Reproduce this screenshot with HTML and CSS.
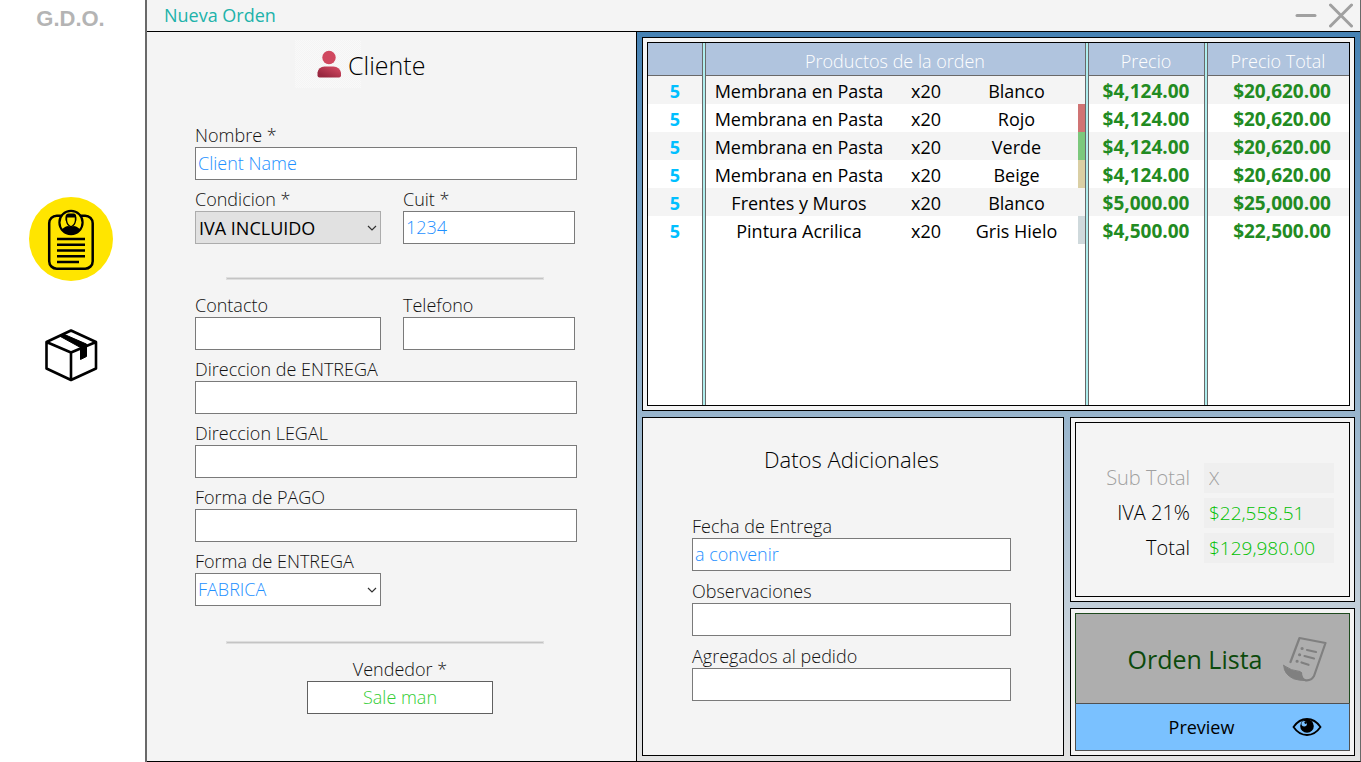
FILE: index.html
```html
<!DOCTYPE html>
<html lang="es">
<head>
<meta charset="utf-8">
<meta name="viewport" content="width=device-width, initial-scale=1">
<title>Nueva Orden</title>
<link rel="stylesheet" href="styles.css">
</head>
<body>
<div class="app">
  <aside class="sidebar">
    <div class="brand">G.D.O.</div>
    <nav class="nav">
      <button class="nav-item nav-item-active" type="button" aria-label="Ordenes">
        <svg width="84" height="84" viewBox="0 0 84 84" fill="none" stroke="#000">
          <rect x="20.200" y="18.700" width="43.500" height="53" rx="7.500" stroke-width="2.500"/>
          <circle cx="42" cy="25.500" r="11.600" fill="#ffe500" stroke-width="2.200"/>
          <path d="M33 33q1.500-3.200 6-4q3 1.600 6 0q4.500.8 6 4q-3.500 4.500-9 4.500t-9-4.500z" fill="#000" stroke="none"/>
          <path d="M37.500 20v3.500q.5 4.500 4.500 6.300q4-1.800 4.500-6.300v-3.500" stroke-width="1.400"/>
          <path d="M36.500 23.500v-4q.4-2.900 3.200-2.900h5.600q2.200.7 2 3.400v3.500h-1.200v-3h-8.400v3z" fill="#000" stroke="none"/>
          <path d="M28 41.900h28M28 47.700h28M28 53.500h28M28 59.300h28M28 65h22" stroke-width="2.500"/>
        </svg>
      </button>
      <button class="nav-item" type="button" aria-label="Productos">
        <svg width="84" height="84" viewBox="0 0 84 84" fill="none" stroke="#000" stroke-width="2.600" stroke-linejoin="round">
          <path d="M42 17.500L67 29v26.500L42 67 17.500 55.500V29zM17.500 29L42 39.500 67 29M42 39.500V67"/>
          <path d="M30.500 23l4-1.900 23 10v12.400l-6 3v-12z" fill="#000" stroke-width="1"/>
        </svg>
      </button>
    </nav>
  </aside>

  <main class="window">
    <header class="titlebar">
      <h1 class="title">Nueva Orden</h1>
      <div class="window-buttons">
        <button class="window-button" type="button" aria-label="Minimizar">
          <svg width="24" height="26" viewBox="0 0 24 26" stroke="#a0a0a0" stroke-width="3" stroke-linecap="round"><path d="M3 13.500h18"/></svg>
        </button>
        <button class="window-button" type="button" aria-label="Cerrar">
          <svg width="24" height="26" viewBox="0 0 24 26" stroke="#a0a0a0" stroke-width="3" stroke-linecap="round"><path d="M1.500 3l21 21M22.500 3l-21 21"/></svg>
        </button>
      </div>
    </header>

    <div class="content">
      <form class="client">
        <h2 class="client-title">
          <svg class="client-icon" width="70" height="50" viewBox="0 0 70 50" aria-hidden="true">
            <defs>
              <pattern id="check" width="2" height="2" patternUnits="userSpaceOnUse"><path d="M0 0h1v1H0zM1 1h1v1H1z" fill="#f9f9f9"/></pattern>
              <linearGradient id="red" x1="0" y1="1" x2="1" y2="0"><stop offset="0.200" stop-color="#98273f"/><stop offset="1" stop-color="#d94d66"/></linearGradient>
            </defs>
            <rect width="66" height="48" fill="url(#check)"/>
            <circle cx="34" cy="17.500" r="6.700" fill="#d0485f"/>
            <path d="M22.500 35.500v-3q1-5.500 7-6h9q6 .5 7.500 6v3q0 2-2 2h-19.500q-2 0-2-2z" fill="url(#red)"/>
          </svg>
          <span>Cliente</span>
        </h2>

        <div class="fields">
          <div class="field">
            <label for="nombre">Nombre *</label>
            <input id="nombre" type="text" value="Client Name">
          </div>
          <div class="pair">
            <div class="field">
              <label for="condicion">Condicion *</label>
              <select id="condicion" class="select-gray"><option>IVA INCLUIDO</option></select>
            </div>
            <div class="field">
              <label for="cuit">Cuit *</label>
              <input id="cuit" type="text" value="1234">
            </div>
          </div>
        </div>

        <hr class="rule">

        <div class="fields">
          <div class="pair">
            <div class="field">
              <label for="contacto">Contacto</label>
              <input id="contacto" type="text">
            </div>
            <div class="field">
              <label for="telefono">Telefono</label>
              <input id="telefono" type="text">
            </div>
          </div>
          <div class="field">
            <label for="dir-entrega">Direccion de ENTREGA</label>
            <input id="dir-entrega" type="text">
          </div>
          <div class="field">
            <label for="dir-legal">Direccion LEGAL</label>
            <input id="dir-legal" type="text">
          </div>
          <div class="field">
            <label for="pago">Forma de PAGO</label>
            <input id="pago" type="text">
          </div>
          <div class="pair">
            <div class="field">
              <label for="entrega">Forma de ENTREGA</label>
              <select id="entrega"><option>FABRICA</option></select>
            </div>
          </div>
        </div>

        <hr class="rule rule-seller">

        <div class="field seller">
          <label for="vendedor">Vendedor *</label>
          <input id="vendedor" type="text" value="Sale man">
        </div>
      </form>

      <div class="order">
        <section class="card products">
          <table class="table">
            <colgroup>
              <col class="col-qty"><col class="col-name"><col class="col-size"><col class="col-color"><col class="col-price"><col class="col-total">
            </colgroup>
            <thead>
              <tr>
                <th aria-label="Cantidad"></th>
                <th class="sep" colspan="3">Productos de la orden</th>
                <th class="sep">Precio</th>
                <th class="sep">Precio Total</th>
              </tr>
            </thead>
            <tbody>
              <tr><td class="qty">5</td><td class="sep name">Membrana en Pasta</td><td>x20</td><td class="color">Blanco</td><td class="sep money">$4,124.00</td><td class="sep money amount">$20,620.00</td></tr>
              <tr><td class="qty">5</td><td class="sep name">Membrana en Pasta</td><td>x20</td><td class="color color-rojo">Rojo</td><td class="sep money">$4,124.00</td><td class="sep money amount">$20,620.00</td></tr>
              <tr><td class="qty">5</td><td class="sep name">Membrana en Pasta</td><td>x20</td><td class="color color-verde">Verde</td><td class="sep money">$4,124.00</td><td class="sep money amount">$20,620.00</td></tr>
              <tr><td class="qty">5</td><td class="sep name">Membrana en Pasta</td><td>x20</td><td class="color color-beige">Beige</td><td class="sep money">$4,124.00</td><td class="sep money amount">$20,620.00</td></tr>
              <tr><td class="qty">5</td><td class="sep name">Frentes y Muros</td><td>x20</td><td class="color">Blanco</td><td class="sep money">$5,000.00</td><td class="sep money amount">$25,000.00</td></tr>
              <tr><td class="qty">5</td><td class="sep name">Pintura Acrilica</td><td>x20</td><td class="color color-gris">Gris Hielo</td><td class="sep money">$4,500.00</td><td class="sep money amount">$22,500.00</td></tr>
              <tr class="filler"><td></td><td class="sep"></td><td></td><td class="color"></td><td class="sep"></td><td class="sep"></td></tr>
            </tbody>
          </table>
        </section>

        <section class="card extra">
          <h2 class="extra-title">Datos Adicionales</h2>
          <div class="extra-fields">
            <div class="field">
              <label for="fecha">Fecha de Entrega</label>
              <input id="fecha" type="text" value="a convenir">
            </div>
            <div class="field">
              <label for="obs">Observaciones</label>
              <input id="obs" type="text">
            </div>
            <div class="field">
              <label for="agregados">Agregados al pedido</label>
              <input id="agregados" type="text">
            </div>
          </div>
        </section>

        <div class="side">
          <section class="card summary">
            <div class="totals">
              <label class="muted" for="subtotal">Sub Total</label>
              <input id="subtotal" class="muted" type="text" value="X" readonly>
              <label for="iva">IVA 21%</label>
              <input id="iva" type="text" value="$22,558.51" readonly>
              <label for="total">Total</label>
              <input id="total" type="text" value="$129,980.00" readonly>
            </div>
          </section>

          <section class="card actions">
            <button class="action action-ready" type="button">
              <span>Orden Lista</span>
              <svg width="44" height="46" viewBox="0 0 44 46" fill="none" stroke="#808080" stroke-width="2.200" stroke-linejoin="round" stroke-linecap="round" aria-hidden="true">
                <path d="M7.500 26L16.500 2l26 5L31 40q-3 5-8.500 4.300q-4.500-1-4.500-7.300"/>
                <path d="M.7 29.500q7.500 5.500 16.500 6q1.500 1 1.500 4.500q1 3 4 4.300q-6 .5-12-1.500Q1 38.500 .7 29.500z" fill="#808080" stroke-width="1"/>
                <path d="M24 14l9 2M21.500 20l9.500 2.500M18.500 26.500l7 2.300"/>
                <path d="M19 12.500h.2M16.500 18.800h.2M14 25.200h.2" stroke-width="3"/>
              </svg>
            </button>
            <button class="action action-preview" type="button">
              <span>Preview</span>
              <svg width="30" height="20" viewBox="0 0 30 20" aria-hidden="true">
                <path d="M1.500 10Q7 2 15 2t13.500 8Q23 18 15 18T1.500 10z" fill="none" stroke="#000" stroke-width="1.800"/>
                <circle cx="15" cy="9" r="6.800" fill="#000"/>
                <circle cx="12.200" cy="6.800" r="2.700" fill="#7ac1ff"/>
                <circle cx="13.700" cy="5.600" r="1.300" fill="#000"/>
              </svg>
            </button>
          </section>
        </div>
      </div>
    </div>
  </main>
</div>
</body>
</html>
```

FILE: styles.css
```css
* { box-sizing: border-box; }

body {
  margin: 0;
  background: #fff;
  color: #000;
  font-family: "Open Sans", "Noto Sans", sans-serif;
  font-size: 18px;
  font-weight: 300;
}

button, input, select { font: inherit; }
button { padding: 0; border: 0; background: none; cursor: pointer; }
svg { display: block; }

.app {
  display: grid;
  grid-template-columns: 147px 1fr;
  min-height: 100vh;
}

/* Sidebar */
.sidebar {
  padding: 6px 4px 0 0;
  border-right: 2px solid #696969;
  display: flex;
  flex-direction: column;
  align-items: center;
}
.brand {
  font: bold 22px/26px "Liberation Sans", sans-serif;
  color: #b4b4b4;
}
.nav {
  margin-top: 165px;
  display: grid;
  gap: 32px;
}
.nav-item { border-radius: 50%; }
.nav-item-active { background: #ffe500; }

/* Window */
.window {
  display: flex;
  flex-direction: column;
  background: #f4f4f4;
  border-right: 1px solid #696969;
  border-bottom: 1px solid #000;
}
.titlebar {
  height: 32px;
  padding: 0 7px 2px 17px;
  display: flex;
  justify-content: space-between;
  align-items: center;
  border-bottom: 1px solid #000;
}
.title {
  margin: 0;
  font-size: 18px;
  font-weight: 400;
  color: #20b2aa;
}
.window-buttons { display: flex; gap: 11px; }
.content {
  flex: 1;
  display: grid;
  grid-template-columns: 490fr 723fr;
}

/* Form fields */
.field { display: grid; }
.field label {
  line-height: 24px;
  height: 24px;
  color: #111;
}
.field input, .field select {
  width: 100%;
  height: 33px;
  padding: 0 2px 2px;
  border: 1px solid #7a7a7a;
  border-radius: 0;
  background: #fff;
  color: #1e90ff;
}
.field select {
  appearance: none;
  background: #fff url("data:image/svg+xml,%3Csvg xmlns='http://www.w3.org/2000/svg' width='10' height='6'%3E%3Cpath d='M1 1l4 4 4-4' fill='none' stroke='%23333' stroke-width='1.2'/%3E%3C/svg%3E") no-repeat right 3px center;
}
.field .select-gray {
  padding: 0 3px;
  background-color: #e1e1e1;
  border-color: #acacac;
  color: #000;
  font-weight: 400;
}

/* Client panel */
.client {
  padding: 8px 59px 24px 48px;
  border-right: 1px solid #000;
}
.client-title {
  margin: 0 0 33px;
  padding-left: 100px;
  height: 50px;
  display: flex;
  align-items: center;
  font-size: 25px;
  font-weight: 300;
}
.client-icon { margin-right: -17px; }
.fields { display: grid; gap: 7px; }
.pair {
  display: grid;
  grid-template-columns: 186fr 172fr;
  gap: 22px;
  padding-right: 2px;
}
.rule {
  height: 3px;
  margin: 33px 33px 13px 31px;
  border: 1px solid #dedede;
  background: #c4c4c4;
}
.rule-seller { margin-top: 35px; }
.seller {
  width: 186px;
  margin-left: 112px;
  text-align: center;
}
.field.seller input {
  text-align: center;
  border-color: #606060;
  color: #32cd32;
}

/* Order pane */
.order {
  padding: 5px;
  display: grid;
  grid-template-columns: 1fr 285px;
  grid-template-rows: 374fr 339fr;
  gap: 6px;
  background: linear-gradient(#4682b4, #e3e3e3);
}
.card {
  border: 1px solid #000;
  background: #f4f4f4;
}
.products { grid-column: 1 / -1; padding: 4px; }

.table {
  width: 100%;
  height: 100%;
  table-layout: fixed;
  border: 1px solid #000;
  border-spacing: 0;
  background: #fff;
  font-size: 18px;
  font-weight: 400;
}
.col-qty { width: 55px; }
.col-size { width: 66px; }
.col-color { width: 127px; }
.col-price { width: 119px; }
.col-total { width: 144px; }
.table th, .table td {
  height: 28px;
  padding: 2px 0 0;
  text-align: center;
  white-space: nowrap;
  line-height: 24px;
}
.table th {
  height: 33px;
  padding-top: 3px;
  background: #b0c4de;
  background-clip: padding-box;
  box-shadow: inset 0 -1px #696969;
  color: #fff;
  font-weight: 300;
}
.table .sep {
  border-left: 2px solid #afeeee;
  box-shadow: inset 1px 0 #696969;
}
.table th.sep { box-shadow: inset 1px -1px #696969; }
.table th:not(:last-child), .table .qty, .table .color, .table td:nth-child(5), .filler td:first-child {
  border-right: 1px solid #696969;
}
.table tbody tr:nth-child(odd):not(.filler) { background: #f4f4f4; }
.table .filler td { height: auto; }
.table .qty { color: #00bfff; font-weight: 700; }
.table .money { color: #228b22; font-size: 19px; font-weight: 700; }
.table .amount { padding-left: 8px; }
.table td.color { padding-right: 11px; }
.color-rojo { background: linear-gradient(#d07474, #d07474) no-repeat right / 7px 100%; }
.color-verde { background: linear-gradient(#7cc87c, #7cc87c) no-repeat right / 7px 100%; }
.color-beige { background: linear-gradient(#dacfa4, #dacfa4) no-repeat right / 7px 100%; }
.color-gris { background: linear-gradient(#cfd9dc, #cfd9dc) no-repeat right / 7px 100%; }

/* Additional data */
.extra { padding: 23px 52px 24px 49px; }
.extra-title {
  margin: 0 0 37px;
  font-size: 22px;
  line-height: 36px;
  font-weight: 300;
  text-align: center;
}
.extra-fields { display: grid; gap: 8px; }

/* Totals and actions */
.side {
  display: grid;
  grid-template-rows: 185fr 148fr;
  gap: 6px;
}
.summary, .actions { padding: 4px; display: grid; }
.totals {
  display: grid;
  grid-template-columns: 1fr 130px;
  align-content: center;
  align-items: center;
  gap: 5px 14px;
  padding: 6px 15px 0;
  border: 1px solid #000;
  font-size: 20px;
  text-align: right;
}
.totals input {
  width: 100%;
  height: 30px;
  padding: 0 5px;
  border: 0;
  background: #efefef;
  color: #00c000;
  font-size: 19px;
}
.totals .muted { color: #a0a0a0; }

.actions { grid-template-rows: 90fr 48fr; }
.action {
  display: grid;
  grid-template-columns: 1fr 44px;
  align-items: center;
  justify-items: center;
  padding-right: 22px;
  font-weight: 400;
}
.action-ready {
  padding-left: 31px;
  border: 1px solid #1e4a1e;
  border-bottom: 0;
  background: #aeaeae;
  color: #0c4a0c;
  font-size: 25px;
}
.action-preview {
  padding-left: 42px;
  padding-right: 20px;
  border: 1px solid #505050;
  background: #7ac1ff;
  color: #000;
  font-size: 18px;
}
```
